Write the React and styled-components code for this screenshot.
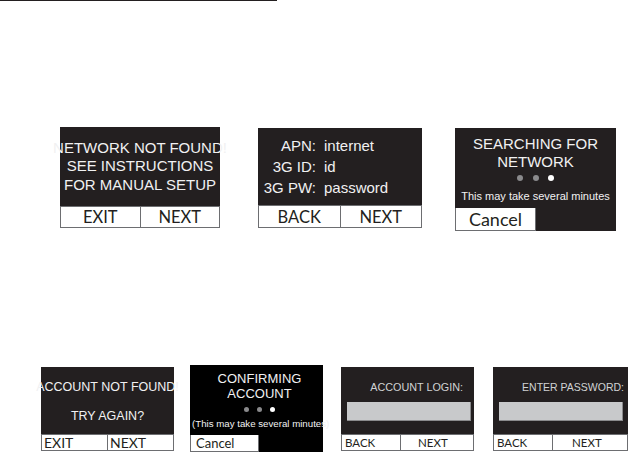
import React from "react";
import styled, { createGlobalStyle } from "styled-components";

const GlobalStyle = createGlobalStyle`
  body {
    margin: 0;
    background: #fff;
    font-family: "Liberation Sans", Arial, sans-serif;
  }
`;

const Page = styled.div`
  width: 629px;
  height: 459px;
  overflow: hidden;
  display: flex;
  flex-direction: column;
`;

const TopRule = styled.div`
  width: 277px;
  height: 1px;
  background: #231f20;
`;

const Row = styled.div`
  display: flex;
  align-items: flex-start;
  margin-top: ${p => p.$mt}px;
`;

// one device screen
const Screen = styled.div`
  flex: none;
  width: ${p => p.$w}px;
  height: ${p => p.$h}px;
  margin-left: ${p => p.$ml}px;
  margin-top: ${p => p.$mt || 0}px;
  display: flex;
  flex-direction: column;
  background: ${p => p.$bg || "#231f20"};
`;

const Display = styled.div`
  flex: 1;
  display: flex;
  flex-direction: column;
  align-items: ${p => p.$align || "center"};
  justify-content: ${p => (p.$top ? "flex-start" : "center")};
  padding-top: ${p => p.$pt || 0}px;
  padding-right: ${p => p.$pr || 0}px;
  color: #f1f1f2;
  font-size: ${p => p.$fs}px;
  line-height: ${p => p.$lh}px;
  white-space: nowrap;
`;

const Line = styled.div`
  margin-top: ${p => p.$mt || 0}px;
  font-size: ${p => p.$fs || "inherit"};
  line-height: ${p => p.$lh || "inherit"};
`;

const FieldGrid = styled.div`
  display: grid;
  grid-template-columns: 58px auto;
  column-gap: 8px;
  align-self: flex-start;
  font-size: 15px;
  line-height: 21px;
  color: #f1f1f2;
`;

const FieldLabel = styled.span`
  text-align: right;
`;

const Dots = styled.div`
  display: flex;
  gap: ${p => p.$gap}px;
  margin-top: ${p => p.$mt}px;
`;

const Dot = styled.span`
  width: ${p => p.$size}px;
  height: ${p => p.$size}px;
  border-radius: 50%;
  background: ${p => (p.$on ? "#ffffff" : "#8a8a8c")};
`;

const ButtonBar = styled.div`
  flex: none;
  height: ${p => p.$h}px;
  display: flex;
  box-sizing: border-box;
  border: 1px solid #6d6e71;
  background: #fff;
`;

const SoftButton = styled.div`
  flex: 1;
  display: flex;
  align-items: center;
  justify-content: ${p => (p.$pl !== undefined ? "flex-start" : "center")};
  padding-left: ${p => p.$pl || 0}px;
  font-family: Lato, "Open Sans", sans-serif;
  font-size: ${p => p.$fs}px;
  color: #231f20;
  & + & {
    border-left: 1px solid #6d6e71;
  }
`;

const Footer = styled.div`
  flex: none;
  height: ${p => p.$h}px;
  display: flex;
`;

const CancelBox = styled.div`
  width: ${p => p.$w}px;
  box-sizing: border-box;
  border: 1px solid #6d6e71;
  border-top: none;
  background: #fff;
  display: flex;
  align-items: center;
  justify-content: ${p => (p.$pl !== undefined ? "flex-start" : "center")};
  padding-left: ${p => p.$pl || 0}px;
  font-family: Lato, "Open Sans", sans-serif;
  font-size: ${p => p.$fs}px;
  color: #231f20;
`;

const Prompt = styled.div`
  align-self: stretch;
  text-align: right;
  padding-right: ${p => p.$pr}px;
  color: #d1d3d4;
  font-size: ${p => p.$fs}px;
  line-height: 13px;
`;

const InputBox = styled.div`
  height: 19px;
  margin: 8px ${p => p.$mr}px 0 6px;
  align-self: stretch;
  background: #c8c9cb;
  border-right: 1px solid #8a8a8c;
  border-bottom: 1px solid #8a8a8c;
  box-sizing: border-box;
`;

function App() {
  return (
    <Page>
      <GlobalStyle />
      <TopRule />

      <Row $mt={126}>
        <Screen $w={160} $h={101} $ml={60}>
          <Display $fs={15} $lh={18.5}>
            <Line>NETWORK NOT FOUND!</Line>
            <Line>SEE INSTRUCTIONS</Line>
            <Line>FOR MANUAL SETUP</Line>
          </Display>
          <ButtonBar $h={22}>
            <SoftButton $fs={16.5}>EXIT</SoftButton>
            <SoftButton $fs={16.5}>NEXT</SoftButton>
          </ButtonBar>
        </Screen>

        <Screen $w={164} $h={100} $ml={38} $mt={1}>
          <Display $fs={15} $lh={21}>
            <FieldGrid>
              <FieldLabel>APN:</FieldLabel>
              <span>internet</span>
              <FieldLabel>3G ID:</FieldLabel>
              <span>id</span>
              <FieldLabel>3G PW:</FieldLabel>
              <span>password</span>
            </FieldGrid>
          </Display>
          <ButtonBar $h={23}>
            <SoftButton $fs={16.5}>BACK</SoftButton>
            <SoftButton $fs={16.5}>NEXT</SoftButton>
          </ButtonBar>
        </Screen>

        <Screen $w={161} $h={103} $ml={33} $mt={1}>
          <Display $fs={15} $lh={18} $top $pt={7}>
            <Line>SEARCHING FOR</Line>
            <Line>NETWORK</Line>
            <Dots $gap={9.5} $mt={4}>
              <Dot $size={6} />
              <Dot $size={6} />
              <Dot $size={6} $on />
            </Dots>
            <Line $mt={8} $fs="11px" $lh="14px">
              This may take several minutes
            </Line>
          </Display>
          <Footer $h={23}>
            <CancelBox $w={81} $fs={18}>
              Cancel
            </CancelBox>
          </Footer>
        </Screen>
      </Row>

      <Row $mt={134}>
        <Screen $w={133} $h={84} $ml={41} $mt={2}>
          <Display $fs={12.5} $lh={15} $top $pt={12.5}>
            <Line>ACCOUNT NOT FOUND!</Line>
            <Line $mt={14}>TRY AGAIN?</Line>
          </Display>
          <ButtonBar $h={17}>
            <SoftButton $fs={14} $pl={2}>
              EXIT
            </SoftButton>
            <SoftButton $fs={14} $pl={2}>
              NEXT
            </SoftButton>
          </ButtonBar>
        </Screen>

        <Screen $w={133} $h={87} $ml={16} $bg="#000">
          <Display $fs={13} $lh={15} $top $pt={5.5} $align="flex-start">
            <Line style={{ alignSelf: "center", marginLeft: 6 }}>CONFIRMING</Line>
            <Line style={{ alignSelf: "center", marginLeft: 6 }}>ACCOUNT</Line>
            <Dots $gap={8} $mt={6} style={{ alignSelf: "center", marginLeft: 6 }}>
              <Dot $size={5} />
              <Dot $size={5} />
              <Dot $size={5} $on />
            </Dots>
            <Line $mt={6.5} $fs="9.7px" $lh="12px" style={{ paddingLeft: 2 }}>
              (This may take several minutes)
            </Line>
          </Display>
          <Footer $h={17}>
            <CancelBox $w={69} $fs={13} $pl={5}>
              Cancel
            </CancelBox>
          </Footer>
        </Screen>

        <Screen $w={133} $h={84} $ml={18} $mt={2}>
          <Display $top $pt={13.5} $fs={10.8} $lh={13}>
            <Prompt $pr={11} $fs={10.8}>
              ACCOUNT LOGIN:
            </Prompt>
            <InputBox $mr={3} />
          </Display>
          <ButtonBar $h={17}>
            <SoftButton $fs={11.5} $pl={3}>
              BACK
            </SoftButton>
            <SoftButton $fs={11.5} $pl={17}>
              NEXT
            </SoftButton>
          </ButtonBar>
        </Screen>

        <Screen $w={135} $h={84} $ml={19} $mt={2}>
          <Display $top $pt={13.5} $fs={10.5} $lh={13}>
            <Prompt $pr={4} $fs={10.5}>
              ENTER PASSWORD:
            </Prompt>
            <InputBox $mr={5} />
          </Display>
          <ButtonBar $h={17}>
            <SoftButton $fs={11.5} $pl={3}>
              BACK
            </SoftButton>
            <SoftButton $fs={11.5} $pl={19}>
              NEXT
            </SoftButton>
          </ButtonBar>
        </Screen>
      </Row>
    </Page>
  );
}

export default App;
